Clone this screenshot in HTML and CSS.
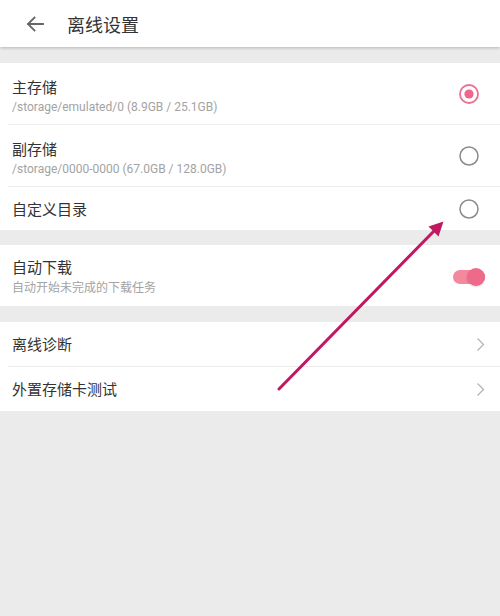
FILE: index.html
```html
<!DOCTYPE html>
<html lang="zh-CN">
<head>
<meta charset="utf-8">
<title>离线设置</title>
<link rel="stylesheet" href="styles.css">
</head>
<body>
<div class="page">
  <header class="topbar">
    <svg class="back" width="18" height="16" viewBox="0 0 18 16" aria-hidden="true">
      <path d="M17 8H2M8.5 1.5L2 8l6.5 6.5" fill="none" stroke="#666" stroke-width="1.8" stroke-linecap="square"/>
    </svg>
    <h1 class="title">离线设置</h1>
  </header>

  <section class="group group-storage">
    <div class="row row-tall">
      <div class="text">
        <div class="label">主存储</div>
        <div class="sub latin">/storage/emulated/0 (8.9GB / 25.1GB)</div>
      </div>
      <svg class="radio" width="22" height="22" viewBox="0 0 22 22">
        <circle cx="11" cy="11" r="9" fill="none" stroke="#ec6f90" stroke-width="1.8"/>
        <circle cx="11" cy="11" r="4.6" fill="#ef6690"/>
      </svg>
    </div>
    <div class="row row-tall">
      <div class="text">
        <div class="label">副存储</div>
        <div class="sub latin">/storage/0000-0000 (67.0GB / 128.0GB)</div>
      </div>
      <svg class="radio" width="22" height="22" viewBox="0 0 22 22">
        <circle cx="11" cy="11" r="9" fill="none" stroke="#8a8a8a" stroke-width="1.5"/>
      </svg>
    </div>
    <div class="row row-short row-last">
      <div class="label">自定义目录</div>
      <svg class="radio" width="22" height="22" viewBox="0 0 22 22">
        <circle cx="11" cy="11" r="9" fill="none" stroke="#8a8a8a" stroke-width="1.5"/>
      </svg>
    </div>
  </section>

  <section class="group group-auto">
    <div class="row row-auto">
      <div class="text">
        <div class="label">自动下载</div>
        <div class="sub">自动开始未完成的下载任务</div>
      </div>
      <div class="switch"><span class="knob"></span></div>
    </div>
  </section>

  <section class="group group-tools">
    <div class="row row-short">
      <div class="label">离线诊断</div>
      <svg class="chev" width="9" height="15" viewBox="0 0 9 15"><polyline points="1.5,1.5 7.5,7.5 1.5,13.5" fill="none" stroke="#b5b5b5" stroke-width="1.3"/></svg>
    </div>
    <div class="row row-short">
      <div class="label">外置存储卡测试</div>
      <svg class="chev" width="9" height="15" viewBox="0 0 9 15"><polyline points="1.5,1.5 7.5,7.5 1.5,13.5" fill="none" stroke="#b5b5b5" stroke-width="1.3"/></svg>
    </div>
  </section>

  <!-- pointer annotation drawn over the list -->
  <svg class="pointer" width="500" height="616" viewBox="0 0 500 616" aria-hidden="true">
    <line x1="279" y1="389" x2="434" y2="231" stroke="#c2185f" stroke-width="3" stroke-linecap="round"/>
    <polygon points="443.5,221.5 438.5,236.5 428.5,226.5" fill="#c2185f"/>
  </svg>
</div>
</body>
</html>
```

FILE: styles.css
```css
html, body {
  margin: 0;
  padding: 0;
}

body {
  background: #ebebeb;
  font-family: "Noto Sans CJK SC", Roboto, sans-serif;
  color: #333;
}

.page {
  position: relative;
  width: 500px;
  height: 616px;
  overflow: hidden;
}

.topbar {
  height: 47px;
  background: #fff;
  display: flex;
  align-items: center;
  padding-left: 26px;
  box-shadow: 0 1px 3px rgba(0, 0, 0, 0.22);
  position: relative;
  z-index: 1;
}

.back {
  display: block;
  margin-top: 1px;
}

.title {
  margin: 0 0 0 23px;
  font-size: 18px;
  font-weight: 400;
  color: #333;
  line-height: 1;
}

.group {
  background: #fff;
}

.group-storage {
  margin-top: 16px;
}

.group-auto {
  margin-top: 15px;
}

.group-tools {
  margin-top: 16px;
}

.row {
  display: flex;
  align-items: center;
  justify-content: space-between;
  margin-left: 8px;
  padding-left: 4px;
}

.row + .row {
  border-top: 1px solid #ededed;
}

.row-tall {
  height: 61px;
}

.row-short {
  height: 44px;
}

.row-last {
  height: 43px;
}

.row-auto {
  height: 61px;
}

.text {
  display: flex;
  flex-direction: column;
}

.label {
  font-size: 15px;
  line-height: 20px;
  color: #333;
}

.sub {
  font-size: 12px;
  line-height: 16px;
  margin-top: 2px;
  color: #a3a3a3;
}

.sub.latin {
  font-family: Roboto, "Noto Sans CJK SC", sans-serif;
  font-size: 12px;
}

.row-tall .text {
  margin-top: 4px;
}

.radio {
  display: block;
  margin-right: 20px;
}

.switch {
  position: relative;
  width: 32px;
  height: 14px;
  border-radius: 7px;
  background: #f3889f;
  margin-right: 15px;
  margin-top: 2px;
}

.knob {
  position: absolute;
  right: 0;
  top: -2px;
  width: 18px;
  height: 18px;
  border-radius: 50%;
  background: #ee6a8b;
  box-shadow: 0 1px 2px rgba(0, 0, 0, 0.15);
}

.chev {
  display: block;
  margin-right: 15px;
}

.pointer {
  position: absolute;
  left: 0;
  top: 0;
  pointer-events: none;
}
```
